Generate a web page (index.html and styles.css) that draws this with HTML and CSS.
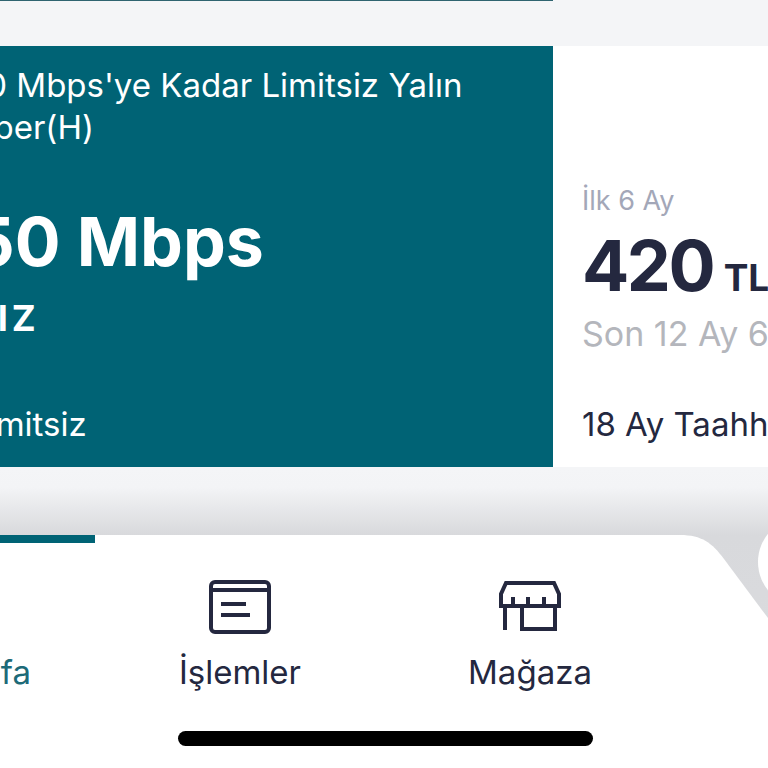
FILE: index.html
```html
<!DOCTYPE html>
<html lang="tr">
<head>
    <meta charset="UTF-8">
    <title>Paketler</title>
    <link rel="stylesheet" href="styles.css">
</head>
<body>
    <div class="top-strip"></div>

    <!-- Paket karti -->
    <div class="package">
        <div class="package-left">
            <div class="package-name">100 Mbps'ye Kadar Limitsiz Yalın</div>
            <div class="package-name package-name-end">Fiber(H)</div>
            <div class="package-speed">150 Mbps</div>
            <div class="package-quota">LIMITSIZ</div>
            <div class="package-limit">Limitsiz</div>
        </div>
        <div class="package-right">
            <div class="price-label">İlk 6 Ay</div>
            <div class="price"><span class="price-value">420</span> <span class="price-unit">TL</span></div>
            <div class="price-next">Son 12 Ay 620 TL</div>
            <div class="price-term">18 Ay Taahhütlü</div>
        </div>
    </div>

    <!-- Alt menu -->
    <div class="nav-area">
        <svg class="nav-shape" width="768" height="301" viewBox="0 0 768 301">
            <path d="M0 68H680C702 68 712 76 724 92L768 151V301H0Z" fill="#fff"/>
        </svg>
        <div class="fab"></div>
        <div class="nav">
            <div class="nav-item nav-home">
                <div class="nav-marker"></div>
                <div class="nav-label nav-label-active">Anasayfa</div>
            </div>
            <div class="nav-item nav-islem">
                <svg width="62" height="54" viewBox="0 0 62 54" fill="none" stroke="#24283f" stroke-width="4">
                    <rect x="2" y="2" width="58" height="50" rx="4"/>
                    <path d="M2 10H60"/>
                    <path d="M12 24H37M12 35H41"/>
                </svg>
                <div class="nav-label">İşlemler</div>
            </div>
            <div class="nav-item nav-magaza">
                <svg width="64" height="54" viewBox="0 0 64 54" fill="none" stroke="#24283f" stroke-width="4">
                    <path d="M3 26V14L8 3H56L61 14V26Z"/>
                    <path d="M15 17V26M30 17V26M46 17V26"/>
                    <path d="M7 26V50M24 26V49H57V26"/>
                </svg>
                <div class="nav-label">Mağaza</div>
            </div>
        </div>
        <div class="home-bar"></div>
    </div>
</body>
</html>
```
FILE: styles.css
```css
html, body {
    margin: 0;
    height: 100%;
}
body {
    width: 768px;
    height: 768px;
    overflow: hidden;
    background-color: #f4f5f7;
    font-family: Inter, sans-serif;
    color: #24283f;
}
.top-strip {
    width: 553px;
    height: 1px;
    margin-bottom: 45px;
    background-color: #2f6470;
}
.package {
    display: flex;
    height: 421px;
    margin-left: -60px;
    width: 1000px;
}
.package-left {
    box-sizing: border-box;
    width: 613px;
    padding: 18px 0 0 12px;
    background-color: #006375;
    color: #fff;
}
.package-name {
    font-size: 33px;
    line-height: 42px;
    white-space: nowrap;
}
.package-name-end {
    margin-left: 14px;
}
.package-speed {
    margin-top: 53px;
    margin-left: -10px;
    font-size: 68px;
    line-height: 80px;
    font-weight: 700;
    white-space: nowrap;
}
.package-quota {
    margin-top: 15px;
    margin-left: -100px;
    font-size: 36px;
    line-height: 44px;
    font-weight: 700;
    letter-spacing: 4px;
}
.package-limit {
    margin-top: 64px;
    margin-left: 17px;
    font-size: 33px;
    line-height: 40px;
}
.package-right {
    flex: 1;
    padding: 137px 0 0 29px;
    background-color: #fff;
}
.price-label {
    font-size: 27px;
    line-height: 36px;
    color: #a3a7b8;
}
.price {
    margin-top: 11px;
    line-height: 72px;
    white-space: nowrap;
}
.price-value {
    font-size: 70px;
    font-weight: 700;
    letter-spacing: -2.5px;
}
.price-unit {
    margin-left: 6px;
    font-size: 37px;
    font-weight: 700;
}
.price-next {
    margin-top: -11px;
    font-size: 34px;
    line-height: 48px;
    color: #b4b6bc;
}
.price-term {
    margin-top: 46px;
    font-size: 33px;
    line-height: 40px;
}
.nav-area {
    position: relative;
    height: 301px;
    background: linear-gradient(#f4f5f7 0, #f3f4f6 20px, #d8d9dc 68px, #dcdde0 100%);
}
.nav-shape {
    position: absolute;
    top: 0;
    left: 0;
}
.fab {
    position: absolute;
    top: 50px;
    left: 758px;
    width: 90px;
    height: 90px;
    border-radius: 50%;
    background-color: #fff;
}
.nav {
    position: relative;
    display: flex;
    padding-top: 68px;
}
.nav-item {
    display: flex;
    flex-direction: column;
    align-items: center;
    box-sizing: border-box;
    padding-top: 45px;
}
.nav-home {
    position: relative;
    width: 95px;
    align-items: flex-end;
}
.nav-marker {
    position: absolute;
    top: 0;
    left: 0;
    width: 95px;
    height: 8px;
    background-color: #006375;
}
.nav-home .nav-label {
    margin-top: 72px;
    margin-right: 64px;
}
.nav-islem {
    width: 290px;
}
.nav-magaza {
    width: 290px;
}
.nav-label {
    margin-top: 18px;
    font-size: 33px;
    line-height: 40px;
    white-space: nowrap;
}
.nav-label-active {
    color: #1d6a78;
}
.home-bar {
    position: absolute;
    top: 264px;
    left: 178px;
    width: 415px;
    height: 15px;
    border-radius: 8px;
    background-color: #000;
}
```
